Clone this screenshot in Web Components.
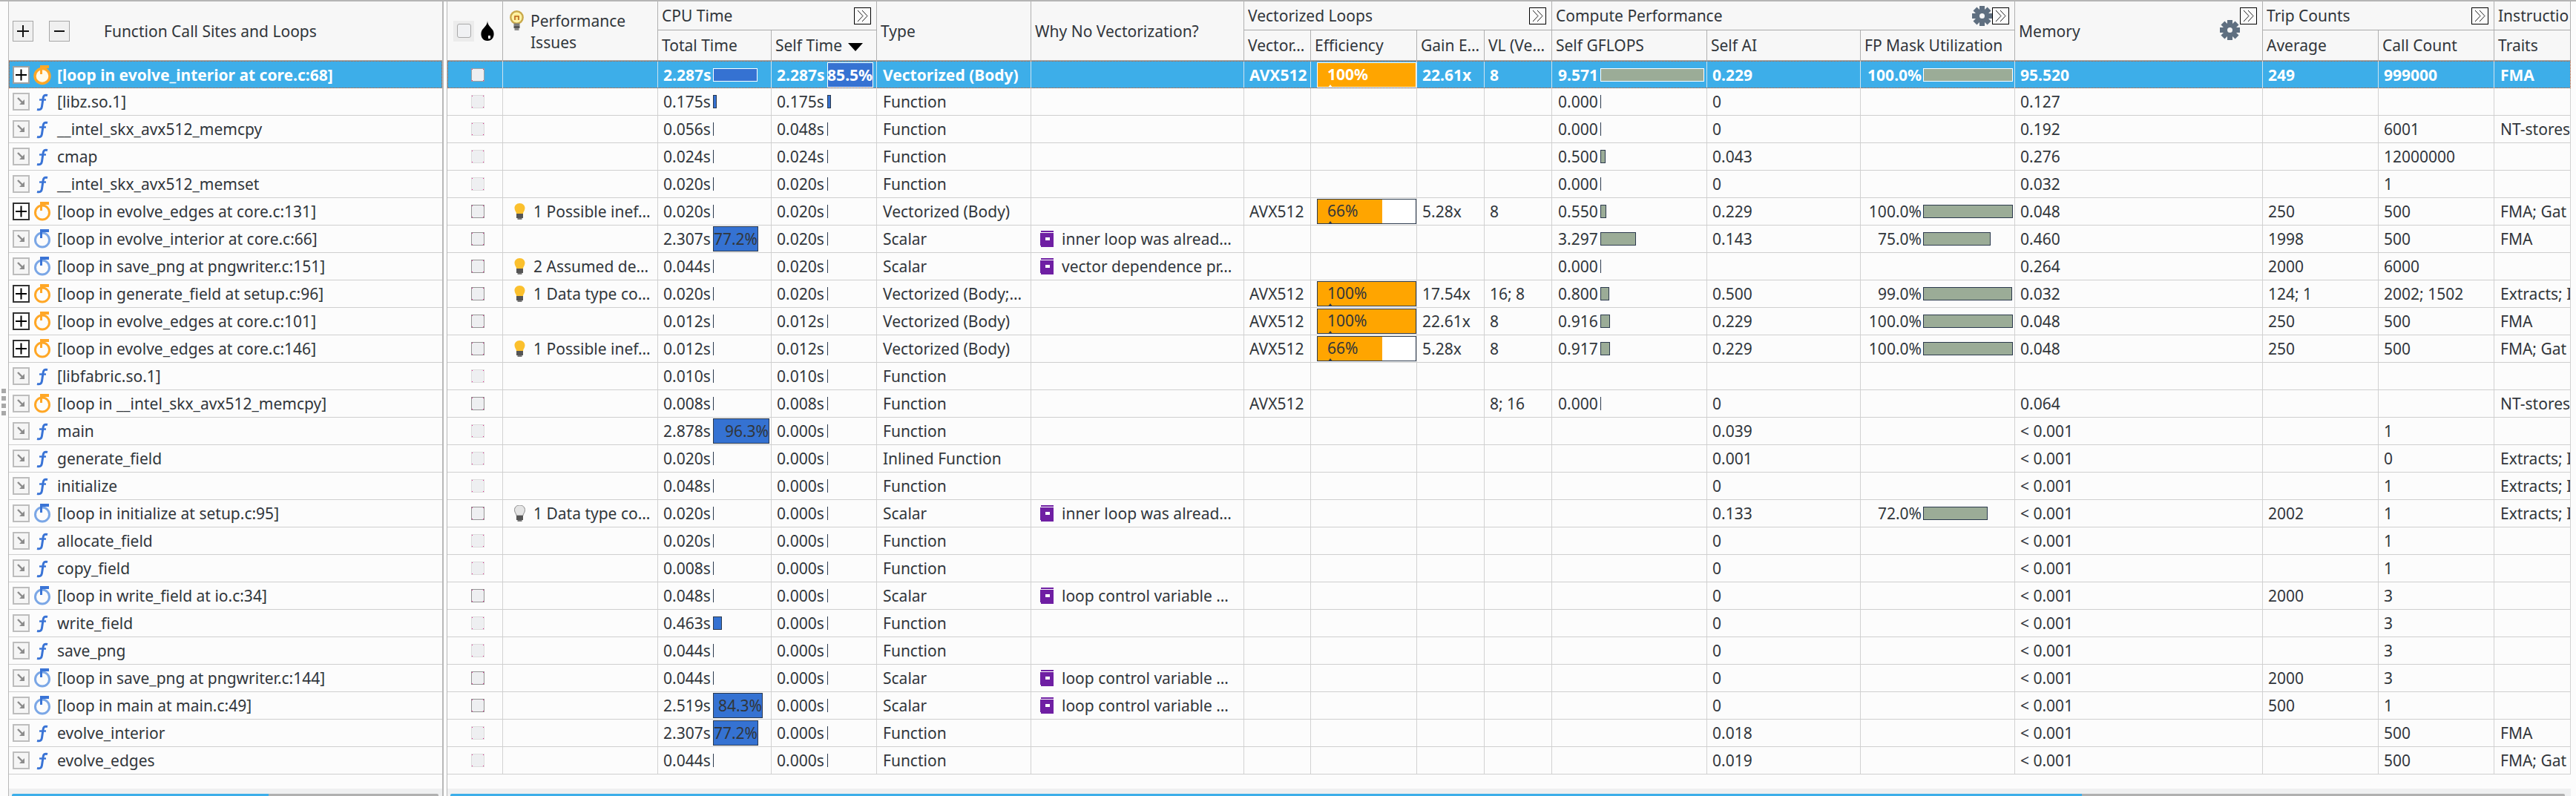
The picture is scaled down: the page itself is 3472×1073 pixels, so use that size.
<!DOCTYPE html>
<html><head><meta charset="utf-8"><title>Survey</title>
<style>html,body{margin:0;padding:0;background:#fcfcfc;}</style></head>
<body><survey-app></survey-app>
<script>
const ROWS=[
['[loop in evolve_interior at core.c:68]','o',1,'','2.287s','','2.287s','85.5%','Vectorized (Body)','','AVX512',100,'22.61x','8','9.571','0.229','100.0%','95.520','249','999000','FMA'],
['[libz.so.1]','f',0,'','0.175s','','0.175s','','Function','','','','','','0.000','0','','0.127','','',''],
['__intel_skx_avx512_memcpy','f',0,'','0.056s','','0.048s','','Function','','','','','','0.000','0','','0.192','','6001','NT-stores'],
['cmap','f',0,'','0.024s','','0.024s','','Function','','','','','','0.500','0.043','','0.276','','12000000',''],
['__intel_skx_avx512_memset','f',0,'','0.020s','','0.020s','','Function','','','','','','0.000','0','','0.032','','1',''],
['[loop in evolve_edges at core.c:131]','o',1,'1 Possible inef…','0.020s','','0.020s','','Vectorized (Body)','','AVX512',66,'5.28x','8','0.550','0.229','100.0%','0.048','250','500','FMA; Gat'],
['[loop in evolve_interior at core.c:66]','b',0,'','2.307s','77.2%','0.020s','','Scalar','inner loop was alread…','','','','','3.297','0.143','75.0%','0.460','1998','500','FMA'],
['[loop in save_png at pngwriter.c:151]','b',0,'2 Assumed de…','0.044s','','0.020s','','Scalar','vector dependence pr…','','','','','0.000','','','0.264','2000','6000',''],
['[loop in generate_field at setup.c:96]','o',1,'1 Data type co…','0.020s','','0.020s','','Vectorized (Body;…','','AVX512',100,'17.54x','16; 8','0.800','0.500','99.0%','0.032','124; 1','2002; 1502','Extracts; I'],
['[loop in evolve_edges at core.c:101]','o',1,'','0.012s','','0.012s','','Vectorized (Body)','','AVX512',100,'22.61x','8','0.916','0.229','100.0%','0.048','250','500','FMA'],
['[loop in evolve_edges at core.c:146]','o',1,'1 Possible inef…','0.012s','','0.012s','','Vectorized (Body)','','AVX512',66,'5.28x','8','0.917','0.229','100.0%','0.048','250','500','FMA; Gat'],
['[libfabric.so.1]','f',0,'','0.010s','','0.010s','','Function','','','','','','','','','','','',''],
['[loop in __intel_skx_avx512_memcpy]','o',0,'','0.008s','','0.008s','','Function','','AVX512','','','8; 16','0.000','0','','0.064','','','NT-stores'],
['main','f',0,'','2.878s','96.3%','0.000s','','Function','','','','','','','0.039','','< 0.001','','1',''],
['generate_field','f',0,'','0.020s','','0.000s','','Inlined Function','','','','','','','0.001','','< 0.001','','0','Extracts; I'],
['initialize','f',0,'','0.048s','','0.000s','','Function','','','','','','','0','','< 0.001','','1','Extracts; I'],
['[loop in initialize at setup.c:95]','b',0,'~1 Data type co…','0.020s','','0.000s','','Scalar','inner loop was alread…','','','','','','0.133','72.0%','< 0.001','2002','1','Extracts; I'],
['allocate_field','f',0,'','0.020s','','0.000s','','Function','','','','','','','0','','< 0.001','','1',''],
['copy_field','f',0,'','0.008s','','0.000s','','Function','','','','','','','0','','< 0.001','','1',''],
['[loop in write_field at io.c:34]','b',0,'','0.048s','','0.000s','','Scalar','loop control variable …','','','','','','0','','< 0.001','2000','3',''],
['write_field','f',0,'','0.463s','','0.000s','','Function','','','','','','','0','','< 0.001','','3',''],
['save_png','f',0,'','0.044s','','0.000s','','Function','','','','','','','0','','< 0.001','','3',''],
['[loop in save_png at pngwriter.c:144]','b',0,'','0.044s','','0.000s','','Scalar','loop control variable …','','','','','','0','','< 0.001','2000','3',''],
['[loop in main at main.c:49]','b',0,'','2.519s','84.3%','0.000s','','Scalar','loop control variable …','','','','','','0','','< 0.001','500','1',''],
['evolve_interior','f',0,'','2.307s','77.2%','0.000s','','Function','','','','','','','0.018','','< 0.001','','500','FMA'],
['evolve_edges','f',0,'','0.044s','','0.000s','','Function','','','','','','','0.019','','< 0.001','','500','FMA; Gat']
];
const COLS='75px 209px 153px 142px 208px 287px 90px 143px 91px 91px 209px 207px 208px 334px 156px 156px 103px';
const ICONS={
 loopo:`<svg width="26" height="28" viewBox="0 0 26 28"><circle cx="12" cy="15.500" r="9.500" fill="none" stroke="#ffa726" stroke-width="3"/><rect x="9" y="1" width="12" height="4" fill="#ffa726"/><rect x="9" y="1" width="3" height="12" fill="#ffa726"/></svg>`,
 loopsel:`<svg width="26" height="28" viewBox="0 0 26 28"><circle cx="12" cy="15.500" r="10" fill="#fffbe8" stroke="#ffa726" stroke-width="3.400"/><rect x="9" y="1" width="12" height="4" fill="#ffa726"/><rect x="9" y="1" width="3" height="12" fill="#ffa726"/></svg>`,
 loopb:`<svg width="26" height="28" viewBox="0 0 26 28"><circle cx="12" cy="15.500" r="9.500" fill="none" stroke="#7ba7e6" stroke-width="3"/><rect x="9" y="1" width="12" height="4" fill="#3a74d6"/><rect x="9" y="1" width="3" height="12" fill="#3a74d6"/></svg>`,
 f:`<svg width="26" height="28" viewBox="0 0 26 28"><path d="M19 5.500C15 4.500 13.600 6 13.200 9L11.400 21C11 24 9 25.500 5 24.500" fill="none" stroke="#3a74d6" stroke-width="3"/><path d="M8 11.500H17" stroke="#3a74d6" stroke-width="2.400"/></svg>`,
 arrow:`<svg width="19" height="20" viewBox="0 0 19 20"><path d="M5 5L12 12" stroke="#8c8c8c" stroke-width="2.400"/><path d="M14 7V14H7Z" fill="#8c8c8c"/></svg>`,
 plus:`<svg width="19" height="20" viewBox="0 0 19 20"><path d="M2 10H17M9.500 2.500V17.500" stroke="#000" stroke-width="2"/></svg>`,
 hplus:`<svg width="24" height="24" viewBox="0 0 24 24"><path d="M4 12H20M12 4V20" stroke="#111" stroke-width="2"/></svg>`,
 hminus:`<svg width="24" height="24" viewBox="0 0 24 24"><path d="M5 12H19" stroke="#111" stroke-width="2"/></svg>`,
 drop:`<svg width="18" height="27" viewBox="0 0 18 27"><path d="M9 0C9 6 4 9 1.500 13C-1 17.500 .5 27 9 27S19 17.500 16.500 13C14 9 9 6 9 0Z" fill="#000"/><rect x="10" y="20" width="3" height="4" fill="#fff"/></svg>`,
 bulbh:`<svg width="19" height="27" viewBox="0 0 19 27"><circle cx="9.500" cy="9.500" r="8.200" fill="#fff3a8" stroke="#c9a94b" stroke-width="2.400"/><circle cx="9.500" cy="9" r="4" fill="#ffe98a"/><path d="M7 13V8H12V13" fill="none" stroke="#b8651e" stroke-width="1.600"/><rect x="5.500" y="17.500" width="8" height="3" fill="#7c7c7c"/><rect x="5.500" y="20.500" width="8" height="3.500" fill="#555"/><rect x="6.500" y="24" width="6" height="3" fill="#8c8c8c"/></svg>`,
 bulb:`<svg width="15" height="22" viewBox="0 0 15 22"><path d="M7.500 0C3 0 .5 3 .5 6.500C.5 10 3 11.500 3 14H12C12 11.500 14.500 10 14.500 6.500C14.500 3 12 0 7.500 0Z" fill="#fbc02d"/><rect x="3" y="14" width="9" height="6" fill="#555"/><rect x="4.500" y="20" width="6" height="2" fill="#777"/></svg>`,
 bulbg:`<svg width="15" height="22" viewBox="0 0 15 22"><path d="M7.500 0C3 0 .5 3 .5 6.500C.5 10 3 11.500 3 14H12C12 11.500 14.500 10 14.500 6.500C14.500 3 12 0 7.500 0Z" fill="#e4e4e4" stroke="#888"/><rect x="3" y="14" width="9" height="6" fill="#555"/><rect x="4.500" y="20" width="6" height="2" fill="#777"/></svg>`,
 book:`<svg width="18" height="22" viewBox="0 0 18 22"><path d="M1 0H18V2H1ZM0 3H18V22H1V20H0Z" fill="#6f1fa3"/><rect x="7" y="9" width="6" height="4" fill="#fff"/></svg>`,
 chev:`<svg width="21" height="21" viewBox="0 0 21 21"><path d="M4 3L11 10.500L4 18M10 3L17 10.500L10 18" fill="none" stroke="#222" stroke-width="1"/></svg>`,
 gear:`<svg width="27" height="27" viewBox="0 0 27 27"><g fill="#5f6f80"><rect x="10" y="0" width="7" height="27"/><rect x="0" y="10" width="27" height="7"/><rect x="10" y="0" width="7" height="27" transform="rotate(45 13.500 13.500)"/><rect x="10" y="0" width="7" height="27" transform="rotate(-45 13.500 13.500)"/><circle cx="13.500" cy="13.500" r="9.500"/></g><circle cx="13.500" cy="13.500" r="3.500" fill="#f7f7f7"/></svg>`
};
class SvgIcon extends HTMLElement{connectedCallback(){if(this.shadowRoot)return;const s=this.attachShadow({mode:'open'});s.innerHTML=`<style>:host{display:inline-flex;flex:none;line-height:0}</style>`+(ICONS[this.getAttribute('name')]||'');}}
customElements.define('svg-icon',SvgIcon);

class TreeHeader extends HTMLElement{constructor(){super();this.attachShadow({mode:'open'}).innerHTML=`<style>
:host{display:flex;align-items:center;height:80px;box-sizing:border-box;background:#f7f7f7;border-bottom:1px solid #a8a8a8;padding-left:5px;font-size:var(--fs);color:#31363b}
.b{width:28px;height:28px;box-sizing:border-box;border:1px solid #a6a6a6;background:#f0f0f0;display:flex;align-items:center;justify-content:center}
.b+.b{margin-left:21px}span{margin-left:46px;white-space:nowrap}</style>
<div class="b"><svg-icon name="hplus"></svg-icon></div><div class="b"><svg-icon name="hminus"></svg-icon></div><span>Function Call Sites and Loops</span>`;}}
customElements.define('tree-header',TreeHeader);

class TreeRow extends HTMLElement{connectedCallback(){if(this.shadowRoot)return;const r=this.row,sel=this.sel;
 const ic=r[1]=='f'?'f':r[1]=='b'?'loopb':sel?'loopsel':'loopo';
 const bs=r[2]?(sel?'border-color:#a0a0a0;background:#fff':'border-color:#333;background:#fff'):'';
 this.attachShadow({mode:'open'}).innerHTML=`<style>
:host{display:flex;align-items:center;height:37px;box-sizing:border-box;border-bottom:1px solid #cfcfcf;background:#fcfcfc;padding-left:5px;font-size:var(--fs);color:#31363b;white-space:nowrap}
:host([sel]){background:#3daee9;color:#fff;font-weight:700;border-bottom:0;outline:1px dotted #d2571e;outline-offset:-1px}
.b{width:23px;height:24px;box-sizing:border-box;border:2px solid #bdbdbd;background:#f5f5f5;display:flex;align-items:center;justify-content:center;flex:none}
.i{margin-left:5px;display:flex}.t{margin-left:6px}</style>
<div class="b" style="${bs}"><svg-icon name="${r[2]?'plus':'arrow'}"></svg-icon></div><div class="i"><svg-icon name="${ic}"></svg-icon></div><span class="t">${r[0]}</span>`;}}
customElements.define('tree-row',TreeRow);

class ScrollTrack extends HTMLElement{connectedCallback(){if(this.shadowRoot)return;const a=this.getAttribute('a'),l=this.getAttribute('l'),r=this.getAttribute('r');this.attachShadow({mode:'open'}).innerHTML=`<style>
:host{display:flex;align-items:flex-end;height:10px;background:#eff0f1;flex:none;box-sizing:border-box;padding:0 ${r}px 0 ${l}px}
.a{height:3px;width:${a}px;background:#3daee9;border-radius:2px 0 0 0}.b{height:3px;flex:1;background:#b0b0b0;border-radius:0 2px 0 0}</style><div class="a"></div><div class="b"></div>`;}}
customElements.define('scroll-track',ScrollTrack);

class TreePane extends HTMLElement{connectedCallback(){if(this.shadowRoot)return;const s=this.attachShadow({mode:'open'});s.innerHTML=`<style>
:host{display:flex;flex-direction:column;width:587px;box-sizing:border-box;border-left:1px solid #b8b8b8;border-right:2px solid #b8b8b8;flex:none}
.rows{flex:1}</style><tree-header></tree-header><div class="rows"></div><scroll-track a="346" l="4" r="5"></scroll-track>`;
 const w=s.querySelector('.rows');ROWS.forEach((r,i)=>{const e=document.createElement('tree-row');e.row=r;e.sel=i==0;if(i==0)e.setAttribute('sel','');w.append(e);});}}
customElements.define('tree-pane',TreePane);

class GridHeader extends HTMLElement{constructor(){super();
 const ch=`<div class="ch"><svg-icon name="chev"></svg-icon></div>`;
 const c=(col,row,cls,html)=>`<div class="c ${cls}" style="grid-column:${col};grid-row:${row}">${html}</div>`;
 this.attachShadow({mode:'open'}).innerHTML=`<style>
:host{display:grid;grid-template-columns:${COLS};grid-template-rows:39px 41px;background:#f7f7f7;font-size:var(--fs);color:#31363b;height:80px}
.c{box-sizing:border-box;border-right:1px solid #b0b0b0;border-bottom:1px solid #a8a8a8;display:flex;align-items:center;padding-left:5px;white-space:nowrap;overflow:hidden;min-width:0}
.g{padding-right:7px}.sp{flex:1}.g span{overflow:hidden}
.ch{width:23px;height:23px;box-sizing:border-box;border:1px solid #000;background:#fbfbfb;display:flex;align-items:center;justify-content:center;flex:none}
.tri{width:0;height:0;border-left:10px solid transparent;border-right:10px solid transparent;border-top:11px solid #000;margin-left:8px;margin-top:4px}
.perf{align-items:flex-start;padding-left:9px}.perf div{line-height:29px;margin-left:9px;margin-top:12px;white-space:normal}.perf svg-icon{margin-top:12px}
.sel{padding-left:7px}.cb{width:28px;height:28px;background:#ececec;display:flex;align-items:center;justify-content:center;margin-left:1px}.cb i{display:block;width:17px;height:17px;border:1px solid #a9a9a9;border-radius:3px;background:#f0f1f3}
.sel svg-icon{margin-left:9px}
.mem{padding-right:7px;align-items:flex-start}.mem span{margin-top:26px;line-height:29px}.mem .sp{flex:1}.mem>svg-icon{margin-top:25px}.mem .ch{margin-top:8px}
</style>
${c('1','1/3','sel',`<div class="cb"><i></i></div><svg-icon name="drop"></svg-icon>`)}
${c('2','1/3','perf',`<svg-icon name="bulbh"></svg-icon><div>Performance Issues</div>`)}
${c('3/5','1','g',`<span>CPU Time</span><div class="sp"></div>${ch}`)}
${c('5','1/3','','Type')}
${c('6','1/3','','Why No Vectorization?')}
${c('7/11','1','g',`<span>Vectorized Loops</span><div class="sp"></div>${ch}`)}
${c('11/14','1','g',`<span>Compute Performance</span><div class="sp"></div><svg-icon name="gear"></svg-icon>${ch}`)}
${c('14','1/3','mem',`<span>Memory</span><div class="sp"></div><svg-icon name="gear"></svg-icon>${ch}`)}
${c('15/17','1','g',`<span>Trip Counts</span><div class="sp"></div>${ch}`)}
${c('17','1','','Instructio')}
${c('3','2','','Total Time')}
${c('4','2','','Self Time<div class="tri"></div>')}
${c('7','2','','Vector…')}
${c('8','2','','Efficiency')}
${c('9','2','','Gain E…')}
${c('10','2','','VL (Ve…')}
${c('11','2','','Self GFLOPS')}
${c('12','2','','Self AI')}
${c('13','2','','FP Mask Utilization')}
${c('15','2','','Average')}
${c('16','2','','Call Count')}
${c('17','2','','Traits')}`;}}
customElements.define('grid-header',GridHeader);

class BarCell extends HTMLElement{connectedCallback(){if(this.shadowRoot)return;
 const v=this.getAttribute('value'),p=this.getAttribute('pct')||'',w=+this.getAttribute('w'),tw=this.getAttribute('tw'),col=this.getAttribute('color'),ra=this.hasAttribute('ra');
 this.attachShadow({mode:'open'}).innerHTML=`<style>
:host{display:flex;align-items:center;height:100%;white-space:nowrap}
.v{width:${tw}px;flex:none;${ra?'text-align:right;':''}}
.bar{box-sizing:border-box;width:${w}px;height:${p?34:18}px;background:${col};border:1px solid var(--barb);border-width:${w<3?'0 0 0 1px':'1px'};display:flex;justify-content:flex-end;align-items:center;flex:none;${ra?'margin-left:2px':''}}
</style><span class="v">${v}</span><div class="bar">${p}</div>`;}}
customElements.define('bar-cell',BarCell);

class EffMeter extends HTMLElement{connectedCallback(){if(this.shadowRoot)return;const p=+this.getAttribute('p');
 this.attachShadow({mode:'open'}).innerHTML=`<style>
:host{display:block;position:relative;box-sizing:border-box;width:134px;height:34px;border:1px solid var(--barb);background:linear-gradient(90deg,#ffa500 ${p}%,#fff ${p}%);padding-left:13px;line-height:30px}
i{position:absolute;left:14px;bottom:-1px;border-left:3px solid transparent;border-right:3px solid transparent;border-bottom:4px solid var(--barb)}
</style>${p}%<i></i>`;}}
customElements.define('eff-meter',EffMeter);

class GridRow extends HTMLElement{connectedCallback(){if(this.shadowRoot)return;const r=this.row;
 const bar=(v,p,w,tw,col,ra)=>`<bar-cell value="${v}" pct="${p}" w="${w}" tw="${tw}" color="${col}" ${ra?'ra':''}></bar-cell>`;
 const secs=x=>parseFloat(x);
 const tw=p=>p?Math.round(parseFloat(p)*.79):Math.max(1,Math.round(secs(r[4])/2.99*79));
 const sw=p=>p?Math.round(parseFloat(p)*.73):Math.max(1,Math.round(secs(r[6])/2.67*73));
 let perf='';if(r[3]){const g=r[3][0]=='~';perf=`<svg-icon name="${g?'bulbg':'bulb'}"></svg-icon><span class="pt">${g?r[3].slice(1):r[3]}</span>`;}
 const why=r[9]?`<svg-icon name="book"></svg-icon><span class="wt">${r[9]}</span>`:'';
 const gf=r[14]?bar(r[14],'',Math.max(1,Math.round(parseFloat(r[14])/9.571*140)),57,'#9bac97'):'';
 const fp=r[16]?bar(r[16],'',Math.round(parseFloat(r[16])*1.21),82,'#9bac97',1):'';
 const cb=r[1]=='f'?'#dcdcdc':'#959595';
 const cells=[
  `<div class="c ck"><i style="border-color:${this.sel?'#a0a0a0':cb}"></i></div>`,
  `<div class="c pf">${perf}</div>`,
  `<div class="c bt">${bar(r[4],r[5],tw(r[5]),67,'#3572d2')}</div>`,
  `<div class="c bt">${bar(r[6],r[7],sw(r[7]),68,'#3572d2')}</div>`,
  `<div class="c p8">${r[8]}</div>`,
  `<div class="c wy">${why}</div>`,
  `<div class="c">${r[10]}</div>`,
  `<div class="c ef">${r[11]!==''?`<eff-meter p="${r[11]}"></eff-meter>`:''}</div>`,
  `<div class="c">${r[12]}</div>`,
  `<div class="c">${r[13]}</div>`,
  `<div class="c p8">${gf}</div>`,
  `<div class="c">${r[15]}</div>`,
  `<div class="c p0">${fp}</div>`,
  `<div class="c">${r[17]}</div>`,
  `<div class="c">${r[18]}</div>`,
  `<div class="c">${r[19]}</div>`,
  `<div class="c p8">${r[20]}</div>`].join('');
 this.attachShadow({mode:'open'}).innerHTML=`<style>
:host{display:grid;grid-template-columns:${COLS};height:37px;box-sizing:border-box;border-bottom:1px solid #cfcfcf;background:#fcfcfc;font-size:var(--fs);color:#31363b;white-space:nowrap;--barb:#2c3a4e;--line:#d2d2d2}
:host([sel]){background:#3daee9;color:#fff;font-weight:700;border-bottom:0;outline:1px dotted #d2571e;outline-offset:-1px;--barb:#fff;--line:#cfe3ef}
.c{box-sizing:border-box;border-right:1px solid var(--line);display:flex;align-items:center;padding-left:7px;overflow:hidden;min-width:0;height:100%}
.p8{padding-left:8px}.p0{padding-left:0}.bt{padding-left:7px}.ef{padding-left:8px;overflow:visible}
.ck{padding-left:32px}.ck i{display:block;box-sizing:border-box;width:18px;height:18px;border:1px solid;background-color:#eeeff1;background-image:linear-gradient(#e0218a,#e0218a),linear-gradient(#e0218a,#e0218a),linear-gradient(#e0218a,#e0218a),linear-gradient(#e0218a,#e0218a);background-size:2px 2px;background-repeat:no-repeat;background-origin:border-box;background-clip:border-box;background-position:0 0,100% 0,0 100%,100% 100%}
.pf{padding-left:15px}.pt{margin-left:11px;overflow:hidden}
.wy{padding-left:12px}.wt{margin-left:11px;overflow:hidden}
</style>${cells}`;}}
customElements.define('grid-row',GridRow);

class GridPane extends HTMLElement{connectedCallback(){if(this.shadowRoot)return;const s=this.attachShadow({mode:'open'});s.innerHTML=`<style>
:host{display:flex;flex-direction:column;flex:1;min-width:0;overflow:hidden}
.rows{flex:1}</style><grid-header></grid-header><div class="rows"></div><scroll-track a="2199" l="4" r="8"></scroll-track>`;
 const w=s.querySelector('.rows');ROWS.forEach((r,i)=>{const e=document.createElement('grid-row');e.row=r;e.sel=i==0;if(i==0)e.setAttribute('sel','');w.append(e);});}}
customElements.define('grid-pane',GridPane);

class SurveyApp extends HTMLElement{constructor(){super();this.attachShadow({mode:'open'}).innerHTML=`<style>
:host{display:flex;box-sizing:border-box;width:3472px;height:1073px;border-top:2px solid #b5b5b5;background:#fcfcfc;font-family:"Noto Sans",sans-serif;--fs:21px;overflow:hidden}
.gut{width:11px;flex:none;display:flex;flex-direction:column;align-items:flex-start;justify-content:center;gap:4px;padding:9px 0 0 2px;box-sizing:border-box}
.gut i{display:block;width:6px;height:6px;background:#a8a8a8}
.spl{width:5px;flex:none;box-sizing:border-box;border-right:1px solid #b8b8b8}
.end{width:7px;flex:none}
</style><div class="gut"><i></i><i></i><i></i><i></i></div><tree-pane></tree-pane><div class="spl"></div><grid-pane></grid-pane><div class="end"></div>`;}}
customElements.define('survey-app',SurveyApp);
</script></body></html>
